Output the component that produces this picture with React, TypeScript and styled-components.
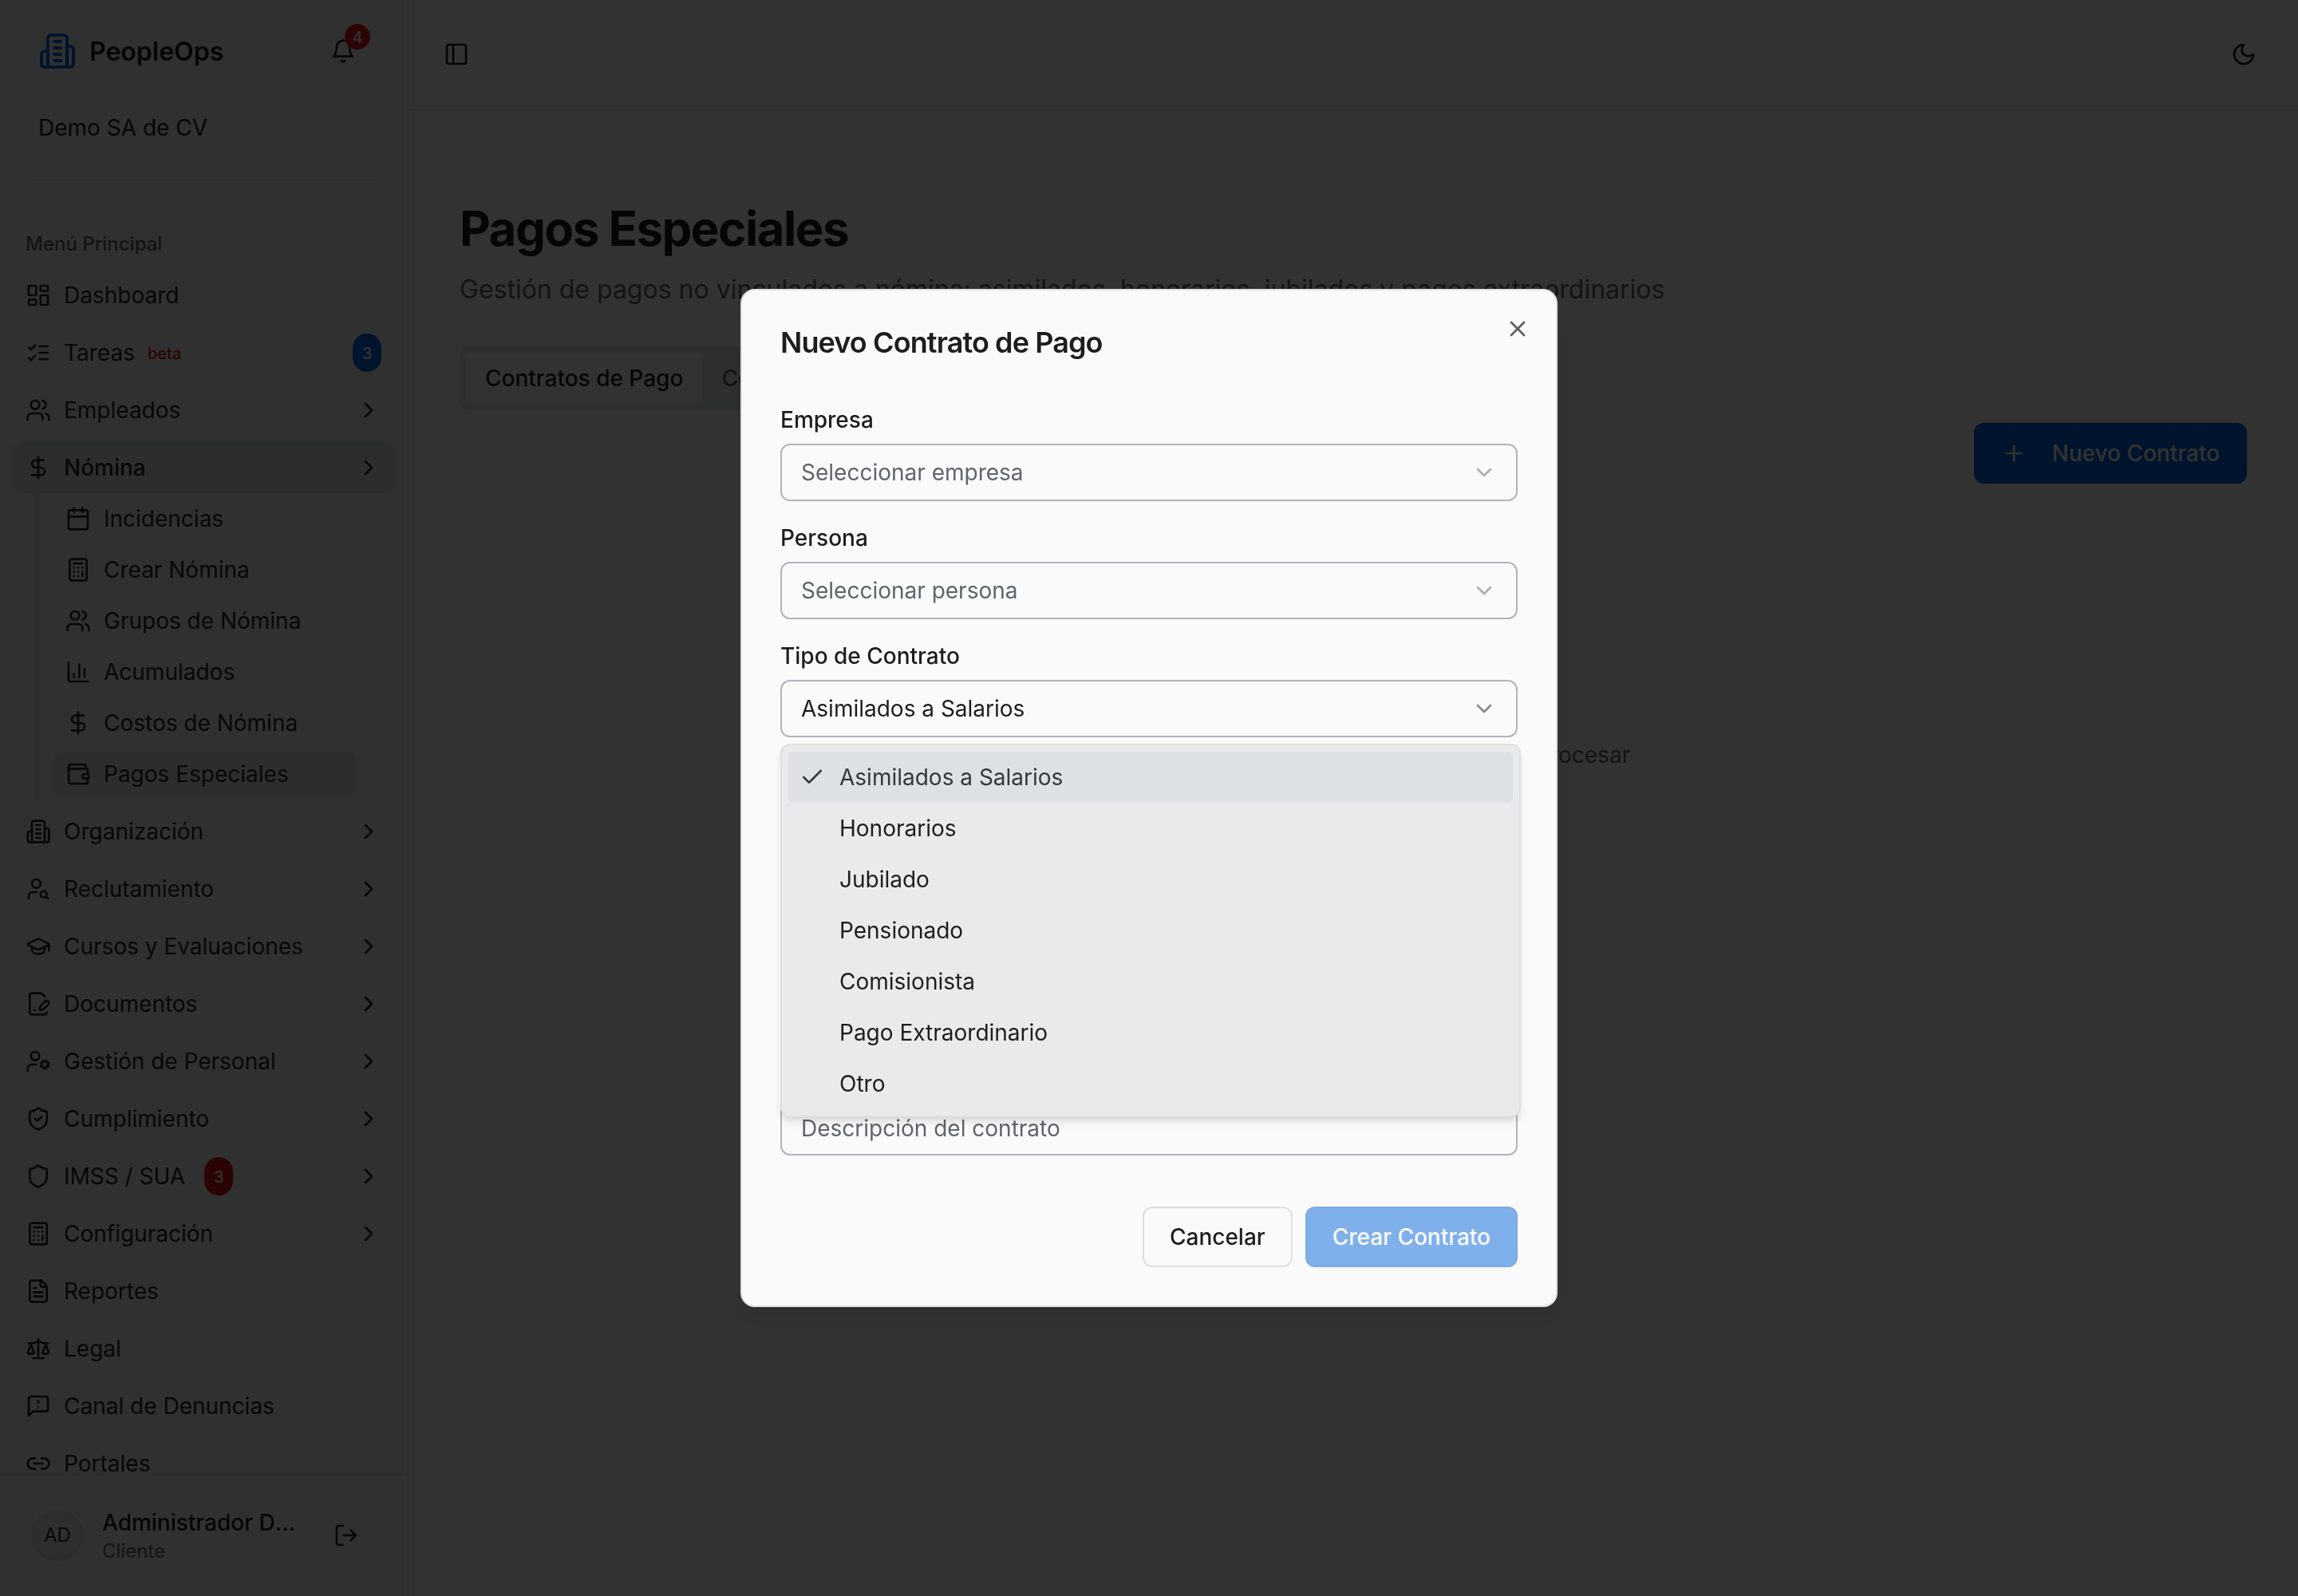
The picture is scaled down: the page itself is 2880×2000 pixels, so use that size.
import React from "react";
import styled, { createGlobalStyle, css } from "styled-components";
import {
  Calculator,
  Calendar,
  Check,
  ChevronDown,
  ChevronRight,
  DollarSign,
  GraduationCap,
  LayoutDashboard,
  Plus,
  Shield,
  ShieldCheck,
  UserCog,
  UserSearch,
  X,
} from "lucide-react";

const color = {
  background: "#fafafa",
  foreground: "#1c1d1f",
  sidebar: "#f0f0f0",
  sidebarText: "#262728",
  sidebarAccent: "#dde5e3",
  line: "#e1e1e1",
  sidebarLine: "#e0e0e0",
  muted: "#5f656d",
  primary: "#0467de",
  primaryBorder: "#005ccc",
  destructive: "#dc1010",
  inputBorder: "#b0b5bc",
  popover: "#e9eaec",
  popoverBorder: "#dfe0e2",
  accent: "#dde0e5",
};

const GlobalStyle = createGlobalStyle`
  *, *::before, *::after { box-sizing: border-box; }
  html, body { margin: 0; padding: 0; background: ${color.background}; }
  body {
    font-family: Inter, "Liberation Sans", sans-serif;
    font-size: 28px;
    line-height: 40px;
    color: ${color.foreground};
    overflow: hidden;
    -webkit-font-smoothing: antialiased;
  }
  button { font: inherit; color: inherit; cursor: pointer; }
  svg { display: block; flex-shrink: 0; }
`;

/* ---------- icons ---------- */

type Glyph = React.ComponentType<{ size?: number | string }>;

const glyph =
  (children: React.ReactNode): Glyph =>
  ({ size = 32 }) => (
    <svg
      width={size}
      height={size}
      viewBox="0 0 24 24"
      fill="none"
      stroke="currentColor"
      strokeWidth={2}
      strokeLinecap="round"
      strokeLinejoin="round"
    >
      {children}
    </svg>
  );

const Building = glyph(
  <>
    <path d="M6 22V4a2 2 0 0 1 2-2h8a2 2 0 0 1 2 2v18Z" />
    <path d="M6 12H4a2 2 0 0 0-2 2v6a2 2 0 0 0 2 2h2" />
    <path d="M18 9h2a2 2 0 0 1 2 2v9a2 2 0 0 1-2 2h-2" />
    <path d="M10 6h4M10 10h4M10 14h4M10 18h4" />
  </>
);
const Bell = glyph(
  <>
    <path d="M6 8a6 6 0 0 1 12 0c0 7 3 9 3 9H3s3-2 3-9" />
    <path d="M10.3 21a1.94 1.94 0 0 0 3.4 0" />
  </>
);
const PanelLeft = glyph(
  <>
    <rect width="18" height="18" x="3" y="3" rx="2" />
    <path d="M9 3v18" />
  </>
);
const Moon = glyph(<path d="M12 3a6 6 0 0 0 9 9 9 9 0 1 1-9-9Z" />);
const ListChecks = glyph(
  <>
    <path d="m3 17 2 2 4-4" />
    <path d="m3 7 2 2 4-4" />
    <path d="M13 6h8M13 12h8M13 18h8" />
  </>
);
const Users = glyph(
  <>
    <path d="M16 21v-2a4 4 0 0 0-4-4H6a4 4 0 0 0-4 4v2" />
    <circle cx="9" cy="7" r="4" />
    <path d="M22 21v-2a4 4 0 0 0-3-3.87" />
    <path d="M16 3.13a4 4 0 0 1 0 7.75" />
  </>
);
const Chart = glyph(
  <>
    <path d="M3 3v16a2 2 0 0 0 2 2h16" />
    <path d="M18 17V9M13 17V5M8 17v-3" />
  </>
);
const Wallet = glyph(
  <>
    <path d="M19 7V4a1 1 0 0 0-1-1H5a2 2 0 0 0 0 4h15a1 1 0 0 1 1 1v4h-3a2 2 0 0 0 0 4h3a1 1 0 0 0 1-1v-2a1 1 0 0 0-1-1" />
    <path d="M3 5v14a2 2 0 0 0 2 2h15a1 1 0 0 0 1-1v-4" />
  </>
);
const FilePen = glyph(
  <>
    <path d="m18 5-2.414-2.414A2 2 0 0 0 14.172 2H6a2 2 0 0 0-2 2v16a2 2 0 0 0 2 2h12a2 2 0 0 0 2-2" />
    <path d="M21.378 12.626a1 1 0 0 0-3.004-3.004l-4.01 4.012a2 2 0 0 0-.506.854l-.837 2.87a.5.5 0 0 0 .62.62l2.87-.837a2 2 0 0 0 .854-.506z" />
    <path d="M8 18h1" />
  </>
);
const FileText = glyph(
  <>
    <path d="M15 2H6a2 2 0 0 0-2 2v16a2 2 0 0 0 2 2h12a2 2 0 0 0 2-2V7Z" />
    <path d="M14 2v4a2 2 0 0 0 2 2h4" />
    <path d="M10 9H8M16 13H8M16 17H8" />
  </>
);
const Scale = glyph(
  <>
    <path d="m16 16 3-8 3 8c-.87.65-1.92 1-3 1s-2.13-.35-3-1Z" />
    <path d="m2 16 3-8 3 8c-.87.65-1.92 1-3 1s-2.13-.35-3-1Z" />
    <path d="M7 21h10M12 3v18" />
    <path d="M3 7h2c2 0 5-1 7-2 2 1 5 2 7 2h2" />
  </>
);
const MessageWarning = glyph(
  <>
    <path d="M21 15a2 2 0 0 1-2 2H7l-4 4V5a2 2 0 0 1 2-2h14a2 2 0 0 1 2 2z" />
    <path d="M12 7v2M12 13h.01" />
  </>
);
const LinkIcon = glyph(
  <>
    <path d="M9 17H7A5 5 0 0 1 7 7h2" />
    <path d="M15 7h2a5 5 0 1 1 0 10h-2" />
    <path d="M8 12h8" />
  </>
);
const LogOut = glyph(
  <>
    <path d="M9 21H5a2 2 0 0 1-2-2V5a2 2 0 0 1 2-2h4" />
    <path d="m16 17 5-5-5-5" />
    <path d="M21 12H9" />
  </>
);

/* ---------- shell ---------- */

const Shell = styled.div`
  display: flex;
  width: 2880px;
  height: 2000px;
  overflow: hidden;
  background: ${color.background};
`;

const Sidebar = styled.aside`
  display: flex;
  flex-direction: column;
  flex: 0 0 512px;
  background: ${color.sidebar};
  border-right: 2px solid ${color.sidebarLine};
  color: ${color.sidebarText};
`;

const SidebarHeader = styled.header`
  padding: 32px 32px 0;
`;

const BrandRow = styled.div`
  display: flex;
  align-items: center;
  height: 64px;
  padding: 0 16px;
  gap: 16px;
  color: ${color.foreground};
`;

const BrandLogo = styled.span`
  color: ${color.primary};
`;

const BrandName = styled.span`
  flex: 1;
  padding-top: 2px;
  font-size: 32px;
  font-weight: 600;
`;

const BellButton = styled.button`
  position: relative;
  display: grid;
  place-items: center;
  width: 64px;
  height: 64px;
  padding: 0;
  border: 0;
  background: none;
`;

const BellCount = styled.span`
  position: absolute;
  top: -2px;
  right: -2px;
  display: grid;
  place-items: center;
  width: 32px;
  height: 32px;
  padding-top: 1px;
  border-radius: 50%;
  background: ${color.destructive};
  color: ${color.background};
  font-size: 20px;
  font-weight: 500;
  line-height: 1;
`;

const Company = styled.div`
  display: flex;
  align-items: center;
  height: 80px;
  margin-top: 24px;
  padding: 0 16px;
  color: ${color.foreground};
`;

const Separator = styled.hr`
  height: 2px;
  margin: 24px 0 0;
  border: 0;
  background: #e6e6e6;
`;

const Menu = styled.nav`
  display: flex;
  flex-direction: column;
  gap: 8px;
  flex: 1;
  min-height: 0;
  overflow: hidden;
  padding: 48px 16px 0;
`;

const MenuLabel = styled.div`
  flex: 0 0 64px;
  display: flex;
  align-items: center;
  margin-bottom: -8px;
  padding: 0 16px;
  font-size: 24px;
  font-weight: 500;
  opacity: 0.7;
`;

const activeFill = css`
  background: ${color.sidebarAccent};
`;

const MenuItem = styled.a<{ $active?: boolean }>`
  flex: 0 0 64px;
  display: flex;
  align-items: center;
  gap: 16px;
  padding: 0 16px;
  border-radius: 12px;
  ${(p) => p.$active && activeFill}
  font-weight: ${(p) => (p.$active ? 500 : 400)};
`;

const MenuText = styled.span`
  flex: 1;
  display: flex;
  align-items: center;
  white-space: nowrap;
`;

const BetaTag = styled.span`
  margin-left: 16px;
  padding-top: 2px;
  font-size: 20px;
  font-weight: 500;
  color: ${color.destructive};
`;

const CountPill = styled.span<{ $tone: "primary" | "danger" }>`
  display: grid;
  place-items: center;
  width: 36px;
  height: 48px;
  margin-left: ${(p) => (p.$tone === "danger" ? "24px" : "0")};
  padding-top: 2px;
  border-radius: 18px;
  background: ${(p) => (p.$tone === "danger" ? color.destructive : color.primary)};
  color: ${color.background};
  font-size: 20px;
  font-weight: 500;
`;

const SubMenu = styled.div`
  display: flex;
  flex-direction: column;
  gap: 8px;
  flex-shrink: 0;
  width: 422px;
  margin: -8px 0 0 30px;
  padding: 4px 20px 4px 18px;
  border-left: 2px solid ${color.sidebarLine};
`;

const SubItem = styled.a<{ $active?: boolean }>`
  display: flex;
  align-items: center;
  gap: 16px;
  width: 380px;
  height: 56px;
  padding: 0 16px;
  border-radius: 12px;
  ${(p) => p.$active && activeFill}
`;

const UserBar = styled.footer`
  display: flex;
  align-items: center;
  flex: 0 0 154px;
  gap: 24px;
  padding: 0 60px 0 40px;
  border-top: 2px solid ${color.sidebarLine};
`;

const Avatar = styled.span`
  display: grid;
  place-items: center;
  width: 64px;
  height: 64px;
  border: 2px solid #d5dddb;
  border-radius: 50%;
  background: #e0e6e4;
  font-size: 24px;
`;

const UserText = styled.div`
  display: flex;
  flex-direction: column;
  flex: 0 0 250px;
  min-width: 0;
  padding-top: 3px;
`;

const UserName = styled.span`
  overflow: hidden;
  font-weight: 500;
  line-height: 35px;
  white-space: nowrap;
  text-overflow: ellipsis;
  color: ${color.foreground};
`;

const UserRole = styled.span`
  font-size: 24px;
  line-height: 35px;
  color: ${color.muted};
`;

const LogoutButton = styled.button`
  margin-left: auto;
  padding: 0;
  border: 0;
  background: none;
`;

/* ---------- page ---------- */

const Page = styled.main`
  display: flex;
  flex-direction: column;
  flex: 1;
  min-width: 0;
`;

const TopBar = styled.header`
  display: flex;
  align-items: center;
  justify-content: space-between;
  flex: 0 0 138px;
  padding: 0 52px 0 44px;
  border-bottom: 2px solid ${color.line};
`;

const Content = styled.section`
  display: flex;
  flex-direction: column;
  align-items: flex-start;
  padding: 112px 64px 0;
`;

const Title = styled.h1`
  margin: 0;
  font-size: 60px;
  font-weight: 700;
  line-height: 72px;
  letter-spacing: -0.025em;
`;

const Subtitle = styled.p`
  margin: 17px 0 0;
  font-size: 32px;
  line-height: 48px;
  color: ${color.muted};
  white-space: nowrap;
`;

const TabList = styled.div`
  display: flex;
  height: 80px;
  margin-top: 47px;
  padding: 8px;
  border-radius: 12px;
  background: #e0e7e5;
`;

const Tab = styled.button<{ $active?: boolean }>`
  height: 64px;
  padding: 0 24px;
  border: 0;
  border-radius: 6px;
  background: ${(p) => (p.$active ? color.background : "transparent")};
  color: ${(p) => (p.$active ? color.foreground : color.muted)};
  font-weight: 500;
`;

const Actions = styled.div`
  display: flex;
  align-self: stretch;
  justify-content: flex-end;
  margin-top: 16px;
`;

const Button = styled.button<{ $variant: "primary" | "outline"; $gap?: number }>`
  display: flex;
  align-items: center;
  gap: ${(p) => p.$gap ?? 0}px;
  height: 76px;
  padding: 0 32px;
  border: 2px solid ${(p) => (p.$variant === "primary" ? color.primaryBorder : "#dfdfdf")};
  border-radius: 12px;
  background: ${(p) => (p.$variant === "primary" ? color.primary : "transparent")};
  color: ${(p) => (p.$variant === "primary" ? color.background : color.foreground)};
  font-weight: 500;
  white-space: nowrap;

  &:disabled {
    opacity: 0.5;
  }
`;

const EmptyHint = styled.p`
  align-self: center;
  margin: 320px 0 0;
  color: ${color.muted};
`;

/* ---------- dialog ---------- */

const Overlay = styled.div`
  position: fixed;
  inset: 0;
  display: grid;
  place-items: center;
  background: rgba(0, 0, 0, 0.8);
`;

const Dialog = styled.div`
  position: relative;
  display: flex;
  flex-direction: column;
  width: 1024px;
  height: 1276px;
  padding: 48px;
  border: 2px solid #dfdfdf;
  border-radius: 18px;
  background: ${color.background};
  box-shadow: 0 20px 30px -6px rgba(0, 0, 0, 0.1), 0 8px 12px -8px rgba(0, 0, 0, 0.1);
`;

const DialogTitle = styled.h2`
  margin: -1px 0 1px;
  font-size: 36px;
  font-weight: 600;
  line-height: 36px;
  letter-spacing: -0.025em;
`;

const CloseButton = styled.button`
  position: absolute;
  top: 32px;
  right: 32px;
  padding: 0;
  border: 0;
  background: none;
  opacity: 0.7;
`;

const Form = styled.form`
  display: flex;
  flex-direction: column;
  gap: 32px;
  margin-top: 64px;
`;

const Field = styled.div`
  position: relative;
  display: flex;
  flex-direction: column;
  gap: 16px;
`;

const Label = styled.label`
  font-weight: 500;
  line-height: 28px;
`;

const Control = styled.div<{ $placeholder?: boolean; $text?: boolean }>`
  display: flex;
  align-items: center;
  justify-content: space-between;
  height: 72px;
  padding: ${(p) => (p.$text ? "4px 24px 0" : "0 24px")};
  border: 2px solid ${color.inputBorder};
  border-radius: 12px;
  color: ${(p) => (p.$placeholder ? color.muted : color.foreground)};
`;

const Caret = styled.span`
  opacity: 0.5;
`;

const SwitchRow = styled.div`
  display: flex;
  align-items: center;
  height: 48px;
`;

const Options = styled.ul`
  position: absolute;
  z-index: 2;
  top: calc(100% + 8px);
  left: 0;
  width: 928px;
  margin: 0;
  padding: 8px;
  border: 2px solid ${color.popoverBorder};
  border-radius: 12px;
  background: ${color.popover};
  box-shadow: 0 8px 12px -2px rgba(0, 0, 0, 0.1), 0 4px 8px -4px rgba(0, 0, 0, 0.1);
  list-style: none;
`;

const Option = styled.li<{ $selected?: boolean }>`
  display: flex;
  align-items: center;
  height: 64px;
  padding-left: 14px;
  border-radius: 6px;
  background: ${(p) => (p.$selected ? color.accent : "transparent")};
  color: ${(p) => (p.$selected ? "#35383b" : color.foreground)};
`;

const OptionMark = styled.span`
  width: 50px;
`;

const DialogFooter = styled.div`
  display: flex;
  justify-content: flex-end;
  gap: 16px;
  margin-top: auto;
`;

/* ---------- data ---------- */

type NavEntry = {
  label: string;
  icon: Glyph;
  expandable?: boolean;
  beta?: boolean;
  count?: number;
  alerts?: number;
  children?: { label: string; icon: Glyph }[];
};

const NAV: NavEntry[] = [
  { label: "Dashboard", icon: LayoutDashboard },
  { label: "Tareas", icon: ListChecks, beta: true, count: 3 },
  { label: "Empleados", icon: Users, expandable: true },
  {
    label: "Nómina",
    icon: DollarSign,
    expandable: true,
    children: [
      { label: "Incidencias", icon: Calendar },
      { label: "Crear Nómina", icon: Calculator },
      { label: "Grupos de Nómina", icon: Users },
      { label: "Acumulados", icon: Chart },
      { label: "Costos de Nómina", icon: DollarSign },
      { label: "Pagos Especiales", icon: Wallet },
    ],
  },
  { label: "Organización", icon: Building, expandable: true },
  { label: "Reclutamiento", icon: UserSearch, expandable: true },
  { label: "Cursos y Evaluaciones", icon: GraduationCap, expandable: true },
  { label: "Documentos", icon: FilePen, expandable: true },
  { label: "Gestión de Personal", icon: UserCog, expandable: true },
  { label: "Cumplimiento", icon: ShieldCheck, expandable: true },
  { label: "IMSS / SUA", icon: Shield, expandable: true, alerts: 3 },
  { label: "Configuración", icon: Calculator, expandable: true },
  { label: "Reportes", icon: FileText },
  { label: "Legal", icon: Scale },
  { label: "Canal de Denuncias", icon: MessageWarning },
  { label: "Portales", icon: LinkIcon },
];

const CONTRACT_TYPES = [
  "Asimilados a Salarios",
  "Honorarios",
  "Jubilado",
  "Pensionado",
  "Comisionista",
  "Pago Extraordinario",
  "Otro",
];

const ACTIVE_PAGE = "Pagos Especiales";

/* ---------- components ---------- */

function NavSection({ entry }: { entry: NavEntry }) {
  const Icon = entry.icon;
  return (
    <>
      <MenuItem $active={!!entry.children}>
        <Icon size={32} />
        <MenuText>
          {entry.label}
          {entry.beta && <BetaTag>beta</BetaTag>}
          {entry.alerts && <CountPill $tone="danger">{entry.alerts}</CountPill>}
        </MenuText>
        {entry.count && <CountPill $tone="primary">{entry.count}</CountPill>}
        {entry.expandable && <ChevronRight size={32} />}
      </MenuItem>
      {entry.children && (
        <SubMenu>
          {entry.children.map(({ label, icon: SubIcon }) => (
            <SubItem key={label} $active={label === ACTIVE_PAGE}>
              <SubIcon size={32} />
              {label}
            </SubItem>
          ))}
        </SubMenu>
      )}
    </>
  );
}

function SelectField({
  label,
  value,
  placeholder,
  options,
}: {
  label: string;
  value?: string;
  placeholder?: string;
  options?: string[];
}) {
  return (
    <Field>
      <Label>{label}</Label>
      <Control $placeholder={!value}>
        {value ?? placeholder}
        <Caret>
          <ChevronDown size={32} />
        </Caret>
      </Control>
      {options && (
        <Options>
          {options.map((option) => (
            <Option key={option} $selected={option === value}>
              <OptionMark>{option === value && <Check size={32} />}</OptionMark>
              {option}
            </Option>
          ))}
        </Options>
      )}
    </Field>
  );
}

function NewContractDialog() {
  return (
    <Overlay>
      <Dialog role="dialog">
        <DialogTitle>Nuevo Contrato de Pago</DialogTitle>
        <CloseButton type="button" aria-label="Cerrar">
          <X size={32} />
        </CloseButton>
        <Form>
          <SelectField label="Empresa" placeholder="Seleccionar empresa" />
          <SelectField label="Persona" placeholder="Seleccionar persona" />
          <SelectField
            label="Tipo de Contrato"
            value="Asimilados a Salarios"
            options={CONTRACT_TYPES}
          />
          <Field>
            <Label>&nbsp;</Label>
            <Control />
          </Field>
          <Field>
            <Label>&nbsp;</Label>
            <Control />
          </Field>
          <SwitchRow />
          <Field>
            <Label>&nbsp;</Label>
            <Control $placeholder $text>
              Descripción del contrato
            </Control>
          </Field>
        </Form>
        <DialogFooter>
          <Button $variant="outline">Cancelar</Button>
          <Button $variant="primary" disabled>
            Crear Contrato
          </Button>
        </DialogFooter>
      </Dialog>
    </Overlay>
  );
}

export default function App() {
  return (
    <>
      <GlobalStyle />
      <Shell>
        <Sidebar>
          <SidebarHeader>
            <BrandRow>
              <BrandLogo>
                <Building size={48} />
              </BrandLogo>
              <BrandName>PeopleOps</BrandName>
              <BellButton aria-label="Notificaciones">
                <Bell size={32} />
                <BellCount>4</BellCount>
              </BellButton>
            </BrandRow>
            <Company>Demo SA de CV</Company>
            <Separator />
          </SidebarHeader>
          <Menu>
            <MenuLabel>Menú Principal</MenuLabel>
            {NAV.map((entry) => (
              <NavSection key={entry.label} entry={entry} />
            ))}
          </Menu>
          <UserBar>
            <Avatar>AD</Avatar>
            <UserText>
              <UserName>Administrador Demo</UserName>
              <UserRole>Cliente</UserRole>
            </UserText>
            <LogoutButton aria-label="Salir">
              <LogOut size={32} />
            </LogoutButton>
          </UserBar>
        </Sidebar>
        <Page>
          <TopBar>
            <PanelLeft size={32} />
            <Moon size={32} />
          </TopBar>
          <Content>
            <Title>Pagos Especiales</Title>
            <Subtitle>
              Gestión de pagos no vinculados a nómina: asimilados, honorarios, jubilados y pagos
              extraordinarios
            </Subtitle>
            <TabList>
              <Tab $active>Contratos de Pago</Tab>
              <Tab>Conceptos</Tab>
            </TabList>
            <Actions>
              <Button $variant="primary" $gap={32}>
                <Plus size={32} />
                Nuevo Contrato
              </Button>
            </Actions>
            <EmptyHint>Crea un contrato de pago para comenzar a procesar</EmptyHint>
          </Content>
        </Page>
      </Shell>
      <NewContractDialog />
    </>
  );
}
